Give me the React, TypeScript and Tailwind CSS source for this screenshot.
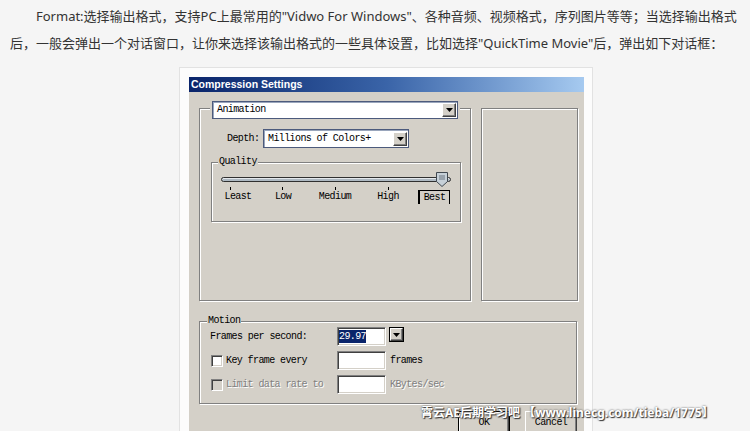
import React from 'react';

const mono = "font-['Liberation_Mono',monospace] text-[10px] tracking-[-0.6px] text-black";
const etched = 'border border-[#808080] shadow-[inset_1px_1px_0_#fff,1px_1px_0_#fff]';
const sunken =
  'border border-t-[#808080] border-l-[#808080] border-b-white border-r-white shadow-[inset_1px_1px_0_#404040,inset_-1px_-1px_0_#d4d0c8]';
const raised =
  'border border-t-white border-l-white border-b-[#404040] border-r-[#404040] shadow-[inset_-1px_-1px_0_#808080]';

const Arrow = () => (
  <svg width="7" height="4" viewBox="0 0 7 4">
    <path d="M0 0h7L3.5 4z" fill="#000" />
  </svg>
);

const GroupLabel = ({ text, indent }: { text: string; indent: string }) => (
  <div className={`-mt-[8px] h-[13px] w-fit bg-[#d4d0c8] px-[1px] leading-[13px] ${indent} ${mono}`}>{text}</div>
);

const Combo = ({ text, width }: { text: string; width: string }) => (
  <div className={`flex h-[18px] items-center justify-between border border-[#4c5a7c] bg-white shadow-[inset_1px_1px_0_#9aa6bc] ${width}`}>
    <span className={`pl-[4px] leading-[16px] ${mono}`}>{text}</span>
    <div className={`mr-[1px] flex h-[14px] w-[14px] items-center justify-center bg-[#d4d0c8] ${raised}`}>
      <Arrow />
    </div>
  </div>
);

const Checkbox = ({ disabled = false }: { disabled?: boolean }) => (
  <div className={`h-[12px] w-[12px] shrink-0 ${sunken} ${disabled ? 'bg-[#d4d0c8]' : 'bg-white'}`} />
);

const Field = ({ children }: { children?: React.ReactNode }) => (
  <div className={`flex h-[19px] w-[49px] shrink-0 items-center bg-white pl-[1px] ${sunken}`}>{children}</div>
);

const Slider = () => {
  const labels = [
    { text: 'Least', cls: 'ml-[6px]' },
    { text: 'Low', cls: 'ml-[5px]' },
    { text: 'Medium', cls: 'ml-[12px]' },
    { text: 'High', cls: 'ml-[13px]' },
  ];
  return (
    <div>
      <div className="relative mt-[4px] ml-[9px] flex h-[14px] w-[230px] items-center">
        <div className="h-[5px] w-full rounded-full border border-[#303030] bg-[#aeb9c2] shadow-[inset_0_1px_0_#e4e8ec]" />
        <svg className="absolute left-[215px] top-0" width="12" height="15" viewBox="0 0 12 15">
          <path d="M0.5 0.5h11v9l-5.5 5l-5.5-5z" fill="#c6d0d8" stroke="#404850" />
          <path d="M4 3v5M6 3v5M8 3v5" stroke="#6a7480" />
        </svg>
      </div>
      <div className="mt-[1px] flex h-[3px]">
        <div className="ml-[18px] w-px bg-black" />
        <div className="ml-[51px] w-px bg-black" />
        <div className="ml-[52px] w-px bg-black" />
        <div className="ml-[52px] w-px bg-black" />
      </div>
      <div className="flex h-[14px]">
        {labels.map((l) => (
          <div key={l.text} className={`w-[40px] text-center leading-[14px] ${l.cls} ${mono}`}>
            {l.text}
          </div>
        ))}
        <div className={`ml-[10px] h-[14px] w-[32px] border-t border-r border-l-2 border-black text-center leading-[13px] ${mono}`}>
          Best
        </div>
      </div>
    </div>
  );
};

const Dialog = () => (
  <div className="w-[395px] bg-[#d4d0c8]">
    <div className="h-[15px] bg-linear-to-r from-[#0a246a] via-[#3a64a8] to-[#a6caf0] pl-[2px] font-['Liberation_Sans',sans-serif] text-[10.5px] font-bold leading-[15px] text-white">
      Compression Settings
    </div>
    <div className="pt-[16px] pr-[6px] pl-[10px]">
      <div className="flex gap-[10px]">
        <div className={`h-[193px] w-[272px] ${etched}`}>
          <div className="-mt-[8px] ml-[10px] w-[250px] bg-[#d4d0c8] px-[2px]">
            <Combo text="Animation" width="w-[246px]" />
          </div>
          <div className="mt-[10px] ml-[27px] flex items-center">
            <div className={`w-[36px] ${mono}`}>Depth:</div>
            <div className="h-[19px]">
              <Combo text="Millions of Colors+" width="w-[146px] h-[19px]" />
            </div>
          </div>
          <div className={`mt-[14px] ml-[11px] h-[60px] w-[250px] ${etched}`}>
            <GroupLabel text="Quality" indent="ml-[6px]" />
            <Slider />
          </div>
        </div>
        <div className={`h-[193px] w-[97px] ${etched}`} />
      </div>

      <div className={`mt-[20px] h-[83px] w-[378px] ${etched}`}>
        <GroupLabel text="Motion" indent="ml-[7px]" />
        <div className="flex h-[19px] items-center pl-[10px]">
          <div className={`w-[127px] ${mono}`}>Frames per second:</div>
          <Field>
            <span className={`bg-[#0a246a] leading-[13px] !text-white ${mono}`}>29.97</span>
          </Field>
          <div className="ml-[3px] h-[15px] self-start border border-black">
            <div className={`flex h-full w-[13px] items-center justify-center bg-[#d4d0c8] ${raised}`}>
              <Arrow />
            </div>
          </div>
        </div>
        <div className="mt-[5px] flex h-[19px] items-center pl-[11px]">
          <Checkbox />
          <div className={`ml-[3px] w-[111px] ${mono}`}>Key frame every</div>
          <Field />
          <div className={`ml-[4px] ${mono}`}>frames</div>
        </div>
        <div className="mt-[5px] flex h-[19px] items-center pl-[11px]">
          <Checkbox disabled />
          <div className={`ml-[3px] w-[111px] ${mono} !text-[#808080] [text-shadow:1px_1px_0_#fff]`}>Limit data rate to</div>
          <Field />
          <div className={`ml-[4px] ${mono} !text-[#808080] [text-shadow:1px_1px_0_#fff]`}>KBytes/sec</div>
        </div>
      </div>

      <div className="mt-[7px] mr-[1px] flex justify-end gap-[15px] pb-[8px]">
        <div className="h-[23px] w-[52px] border border-black">
          <div className={`flex h-full items-center justify-center bg-[#d4d0c8] ${raised} ${mono}`}>OK</div>
        </div>
        <div className={`flex h-[23px] w-[52px] items-center justify-center bg-[#d4d0c8] ${raised} ${mono}`}>Cancel</div>
      </div>
    </div>
  </div>
);

export default function App() {
  return (
    <div className="relative min-h-[431px] overflow-hidden bg-[#f5f5f5] font-['Noto_Sans','Noto_Sans_CJK_SC',sans-serif] text-[#333]">
      <p className="px-[10px] pt-[3px] text-[13px] leading-[27px] whitespace-nowrap">
        <span className="pl-[26px]">Format:选择输出格式，支持PC上最常用的"Vidwo For Windows"、各种音频、视频格式，序列图片等等；当选择输出格式</span>
        <br />
        后，一般会弹出一个对话窗口，让你来选择该输出格式的一些具体设置，比如选择"QuickTime Movie"后，弹出如下对话框：
      </p>
      <div className="mt-[10px] ml-[179px] w-[414px] border border-[#e2e2e2] bg-[#fcfcfc] pt-[9px] pl-[9px]">
        <Dialog />
      </div>
      <div className="absolute top-[405px] left-[421px] font-['Noto_Sans','Noto_Sans_CJK_SC',sans-serif] text-[12px] leading-[15px] font-bold whitespace-nowrap text-white [text-shadow:0_0_2px_#444,1px_1px_1px_#333]">
        霄云AE后期学习吧 【www.linecg.com/tieba/1775】
      </div>
    </div>
  );
}
